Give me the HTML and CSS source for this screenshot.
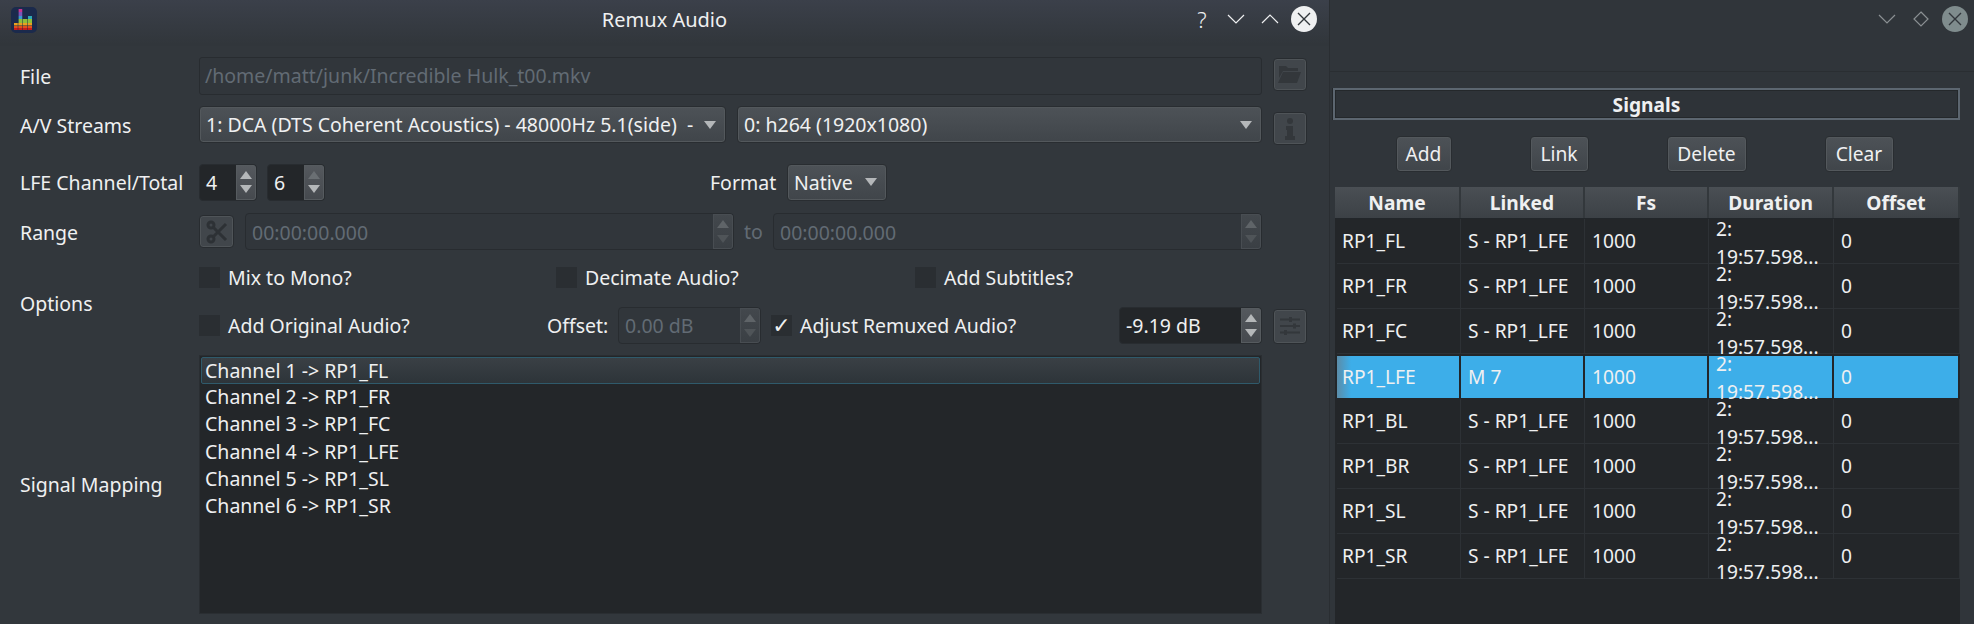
FILE: index.html
```html
<!DOCTYPE html>
<html>
<head>
  <meta charset="utf-8">
  <title>Remux Audio</title>
  <link rel="stylesheet" href="styles.css">
</head>
<body>
  <div class="dialog">
    <div class="titlebar">
      <svg class="app-icon" width="26" height="26" viewBox="0 0 26 26">
        <rect width="26" height="26" rx="5" fill="#1b2a4c"/>
        <rect x="7.500" y="2" width="4" height="3" fill="#c9358f"/>
        <rect x="7.500" y="5" width="4" height="4" fill="#7d55b8"/>
        <rect x="7.500" y="9" width="4" height="3" fill="#3a9ad0"/>
        <rect x="17" y="9" width="4" height="3" fill="#2fa8b8"/>
        <rect x="7.500" y="12" width="13.500" height="4" fill="#8fbf3a"/>
        <rect x="3" y="16" width="18" height="3" fill="#e8a020"/>
        <rect x="3" y="19" width="18" height="2" fill="#e0501c"/>
        <rect x="3" y="21" width="18" height="2" fill="#c81c1c"/>
        <path d="M7 2v21M11.500 2v21M16.500 9v14M3 18.500h18" stroke="#1b2a4c" stroke-width=".5"/>
      </svg>
      <div class="title">Remux Audio</div>
      <div class="win-btns">
        <span class="help">?</span>
        <svg class="win-btn" width="34" height="38" viewBox="0 0 34 38"><path d="M9 15l8 8 8-8" fill="none" stroke="#eff0f1" stroke-width="1.2"/></svg>
        <svg class="win-btn" width="34" height="38" viewBox="0 0 34 38"><path d="M9 23l8-8 8 8" fill="none" stroke="#eff0f1" stroke-width="1.2"/></svg>
        <svg class="win-btn" width="34" height="38" viewBox="0 0 34 38"><circle cx="17" cy="19" r="13" fill="#eff0f1"/><path d="M11 13l12 12M23 13l-12 12" stroke="#31363b" stroke-width="1.4"/></svg>
      </div>
    </div>

    <div class="row row-file">
      <div class="row-label">File</div>
      <div class="row-fields">
        <div class="input disabled grow">/home/matt/junk/Incredible Hulk_t00.mkv</div>
      </div>
      <div class="icon-btn">
        <svg width="24" height="18" viewBox="0 0 24 18"><path d="M1 0h7l2 2h10v3H5L1 12zM5 6h18l-4 11H0z" fill="#33373b"/></svg>
      </div>
    </div>

    <div class="row row-streams">
      <div class="row-label">A/V Streams</div>
      <div class="row-fields">
        <div class="combo stream-audio"><span class="combo-text">1: DCA (DTS Coherent Acoustics) - 48000Hz 5.1(side)  -</span><i class="arrow-down"></i></div>
        <div class="combo grow"><span class="combo-text">0: h264 (1920x1080)</span><i class="arrow-down"></i></div>
      </div>
      <div class="icon-btn">
        <svg width="12" height="22" viewBox="0 0 12 22"><circle cx="6" cy="3" r="3" fill="#33373b"/><path d="M2 8h7v10h2v4H1v-4h2v-6H2z" fill="#33373b"/></svg>
      </div>
    </div>

    <div class="row row-lfe">
      <div class="row-label">LFE Channel/Total</div>
      <div class="row-fields">
        <div class="spin spin-small"><span class="spin-text">4</span><div class="spin-arrows"><i class="arrow-up"></i><i class="arrow-down"></i></div></div>
        <div class="spin spin-small"><span class="spin-text">6</span><div class="spin-arrows"><i class="arrow-up dim"></i><i class="arrow-down"></i></div></div>
        <span class="format-label">Format</span>
        <div class="combo format-combo"><span class="combo-text">Native</span><i class="arrow-down"></i></div>
      </div>
    </div>

    <div class="row row-range">
      <div class="row-label">Range</div>
      <div class="row-fields">
        <div class="icon-btn scissors">
          <svg width="22" height="24" viewBox="0 0 22 24"><g fill="none" stroke="#2d3135" stroke-width="3"><circle cx="5" cy="5" r="3"/><circle cx="5" cy="19" r="3"/><path d="M7 7l13 13M7 17L20 4"/></g></svg>
        </div>
        <div class="spin disabled range-from"><span class="spin-text">00:00:00.000</span><div class="spin-arrows"><i class="arrow-up"></i><i class="arrow-down"></i></div></div>
        <span class="to-label">to</span>
        <div class="spin disabled grow"><span class="spin-text">00:00:00.000</span><div class="spin-arrows"><i class="arrow-up"></i><i class="arrow-down"></i></div></div>
      </div>
    </div>

    <div class="row row-options">
      <div class="row-label options-label">Options</div>
      <div class="row-fields options">
        <div class="options-line first">
          <label class="check check-mix"><i class="box"></i>Mix to Mono?</label>
          <label class="check check-decimate"><i class="box"></i>Decimate Audio?</label>
          <label class="check"><i class="box"></i>Add Subtitles?</label>
        </div>
        <div class="options-line">
          <label class="check check-original"><i class="box"></i>Add Original Audio?</label>
          <span class="offset-label">Offset:</span>
          <div class="spin disabled offset-spin"><span class="spin-text">0.00 dB</span><div class="spin-arrows"><i class="arrow-up"></i><i class="arrow-down"></i></div></div>
          <label class="check check-adjust"><i class="box">&#10003;</i>Adjust Remuxed Audio?</label>
          <div class="spin gain-spin"><span class="spin-text">-9.19 dB</span><div class="spin-arrows"><i class="arrow-up"></i><i class="arrow-down"></i></div></div>
        </div>
      </div>
      <div class="icon-btn sliders">
        <svg width="22" height="20" viewBox="0 0 22 20"><g fill="#33373b"><rect x="1" y="2.500" width="20" height="2"/><rect x="1" y="9" width="20" height="2"/><rect x="1" y="15.500" width="20" height="2"/><rect x="10" y="1" width="3" height="5"/><rect x="14" y="7.500" width="3" height="5"/><rect x="5" y="14" width="3" height="5"/></g></svg>
      </div>
    </div>

    <div class="row row-mapping">
      <div class="row-label">Signal Mapping</div>
      <div class="row-fields">
        <div class="map-list">
          <div class="map-item current">Channel 1 -&gt; RP1_FL</div>
          <div class="map-item">Channel 2 -&gt; RP1_FR</div>
          <div class="map-item">Channel 3 -&gt; RP1_FC</div>
          <div class="map-item">Channel 4 -&gt; RP1_LFE</div>
          <div class="map-item">Channel 5 -&gt; RP1_SL</div>
          <div class="map-item">Channel 6 -&gt; RP1_SR</div>
        </div>
      </div>
    </div>
  </div>

  <div class="signals">
    <div class="signals-top">
      <svg class="win-btn" width="34" height="38" viewBox="0 0 34 38"><path d="M9 15l8 8 8-8" fill="none" stroke="#8b9093" stroke-width="1.2"/></svg>
      <svg class="win-btn" width="34" height="38" viewBox="0 0 34 38"><path d="M17 12l7 7-7 7-7-7z" fill="none" stroke="#8b9093" stroke-width="1.2"/></svg>
      <svg class="win-btn" width="34" height="38" viewBox="0 0 34 38"><circle cx="17" cy="19" r="13" fill="#7f8c8d"/><path d="M11 13l12 12M23 13l-12 12" stroke="#31363b" stroke-width="1.4"/></svg>
    </div>
    <div class="signals-frame">Signals</div>
    <div class="signals-btns">
      <div class="push btn-add">Add</div>
      <div class="push btn-link">Link</div>
      <div class="push btn-delete">Delete</div>
      <div class="push btn-clear">Clear</div>
    </div>
    <div class="table">
      <div class="table-row table-head">
        <div>Name</div><div>Linked</div><div>Fs</div><div>Duration</div><div>Offset</div>
      </div>
      <div class="table-row"><div>RP1_FL</div><div>S - RP1_LFE</div><div>1000</div><div class="dur"><span>2:</span><span>19:57.598...</span></div><div>0</div></div>
      <div class="table-row"><div>RP1_FR</div><div>S - RP1_LFE</div><div>1000</div><div class="dur"><span>2:</span><span>19:57.598...</span></div><div>0</div></div>
      <div class="table-row"><div>RP1_FC</div><div>S - RP1_LFE</div><div>1000</div><div class="dur"><span>2:</span><span>19:57.598...</span></div><div>0</div></div>
      <div class="table-row selected"><div>RP1_LFE</div><div>M 7</div><div>1000</div><div class="dur"><span>2:</span><span>19:57.598...</span></div><div>0</div></div>
      <div class="table-row"><div>RP1_BL</div><div>S - RP1_LFE</div><div>1000</div><div class="dur"><span>2:</span><span>19:57.598...</span></div><div>0</div></div>
      <div class="table-row"><div>RP1_BR</div><div>S - RP1_LFE</div><div>1000</div><div class="dur"><span>2:</span><span>19:57.598...</span></div><div>0</div></div>
      <div class="table-row"><div>RP1_SL</div><div>S - RP1_LFE</div><div>1000</div><div class="dur"><span>2:</span><span>19:57.598...</span></div><div>0</div></div>
      <div class="table-row"><div>RP1_SR</div><div>S - RP1_LFE</div><div>1000</div><div class="dur"><span>2:</span><span>19:57.598...</span></div><div>0</div></div>
    </div>
  </div>
</body>
</html>
```

FILE: styles.css
```css
html, body {
  height: 100%;
}
body {
  margin: 0;
  display: flex;
  height: 624px;
  overflow: hidden;
  background: #31363b;
  color: #eff0f1;
  font-family: "Noto Sans", sans-serif;
  font-size: 19.5px;
}
.dialog {
  width: 1330px;
  flex: none;
  background: #32373c;
  border-right: 1px solid #2a2e32;
  box-sizing: border-box;
}
.titlebar {
  height: 46px;
  margin-bottom: 11px;
  display: flex;
  align-items: flex-start;
  background: linear-gradient(#3b404a, #31363b 44px);
  position: relative;
}
.app-icon {
  margin: 7px 0 0 11px;
}
.title {
  position: absolute;
  left: 0;
  right: 0;
  top: 6px;
  text-align: center;
  line-height: 28px;
  font-size: 20px;
}
.win-btns {
  margin-left: auto;
  margin-right: 8px;
  display: flex;
  align-items: center;
  height: 38px;
  position: relative;
}
.help {
  width: 34px;
  text-align: center;
  font-weight: 300;
  font-size: 22px;
}
.win-btn {
  display: block;
}

/* form rows */
.row {
  display: flex;
  align-items: center;
}
.row-label {
  width: 179px;
  padding-left: 20px;
  flex: none;
}
.options-label {
  margin-top: -5px;
}
.row-fields {
  width: 1063px;
  flex: none;
  display: flex;
  align-items: center;
}
.grow {
  flex: 1;
  min-width: 0;
}
.row-file { height: 38px; margin-bottom: 11px; }
.row-streams { height: 39px; margin-bottom: 18px; }
.row-streams .row-fields { align-self: flex-start; }
.row-lfe { height: 38px; margin-bottom: 12px; }
.row-range { height: 37px; margin-bottom: 18px; }
.row-range .row-label { padding-top: 2px; }
.row-range .spin-text { line-height: 38px; }
.row-options { height: 76px; margin-bottom: 11px; }
.row-mapping { height: 259px; }
.row-mapping .row-fields { height: 100%; }

.input {
  height: 38px;
  box-sizing: border-box;
  border: 1px solid #282c30;
  border-radius: 3px;
  padding: 0 5px;
  line-height: 36px;
  background: #31363b;
}
.disabled,
.disabled .spin-text {
  color: #626b74;
}
.disabled.input {
  background: #31363b;
}

.combo {
  height: 37px;
  box-sizing: border-box;
  display: flex;
  align-items: center;
  padding: 0 9px 0 6px;
  border: 1px solid #292d31;
  border-radius: 4px;
  background: linear-gradient(#4d5257, #40454a);
  box-shadow: inset 0 0 0 1px #53585c;
  overflow: hidden;
}
.combo-text {
  white-space: pre;
  overflow: hidden;
  flex: 1;
  line-height: 35px;
}
.combo .arrow-down {
  flex: none;
}
.stream-audio {
  width: 527px;
  margin-right: 11px;
}
.format-label {
  margin-left: 375px;
  width: 77px;
  flex: none;
}
.format-combo {
  width: 100px;
}

i.arrow-up,
i.arrow-down {
  display: block;
  width: 0;
  height: 0;
  border-left: 6px solid transparent;
  border-right: 6px solid transparent;
}
i.arrow-up { border-bottom: 8px solid #b4b7b9; }
i.arrow-down { border-top: 8px solid #b4b7b9; }
i.arrow-up.dim { border-bottom-color: #6a6f73; }
.disabled i.arrow-up { border-bottom-color: #5f6468; }
.disabled i.arrow-down { border-top-color: #4f5458; }

.spin {
  height: 37px;
  box-sizing: border-box;
  display: flex;
  border: 1px solid #282c30;
  border-radius: 4px;
  background: #232629;
  overflow: hidden;
}
.spin.disabled {
  background: #31363b;
}
.spin-text {
  flex: 1;
  min-width: 0;
  padding-left: 6px;
  line-height: 36px;
  white-space: nowrap;
  overflow: hidden;
}
.spin-arrows {
  width: 20px;
  flex: none;
  display: flex;
  flex-direction: column;
  align-items: center;
  justify-content: space-evenly;
  background: linear-gradient(#55595e, #45494e);
  box-shadow: inset 0 0 0 1px #565b5f;
  border-radius: 0 3px 3px 0;
}
.spin.disabled .spin-arrows {
  background: linear-gradient(#43484d, #3a3f44);
  box-shadow: inset 0 0 0 1px #484d52;
}
.spin-small {
  width: 58px;
  margin-right: 10px;
}
.range-from {
  width: 489px;
}
.to-label {
  width: 39px;
  padding-left: 10px;
  box-sizing: border-box;
  color: #626b74;
}

.icon-btn {
  width: 34px;
  height: 33px;
  flex: none;
  margin-left: 11px;
  box-sizing: border-box;
  display: flex;
  align-items: center;
  justify-content: center;
  border: 1px solid #282c30;
  border-radius: 4px;
  background: #41464b;
  box-shadow: inset 0 0 0 1px #4f5458;
}
.row-file .icon-btn { margin-top: -3px; }
.row-streams .icon-btn { margin-top: 6px; }
.row-options .icon-btn { margin-top: 40px; height: 35px; }
.icon-btn.scissors {
  margin: 0 11px 0 0;
  width: 35px;
}

/* options block */
.options {
  display: block;
}
.options-line {
  display: flex;
  align-items: center;
  height: 37px;
}
.options-line.first {
  height: 21px;
  margin-bottom: 19px;
  margin-top: -1px;
}
.check {
  display: flex;
  align-items: center;
  white-space: nowrap;
}
.box {
  width: 21px;
  height: 21px;
  flex: none;
  margin-right: 8px;
  background: #2a2e32;
  font-family: "DejaVu Sans", sans-serif;
  font-style: normal;
  font-weight: 700;
  font-size: 22px;
  line-height: 21px;
  text-align: center;
}
.check-mix { width: 357px; }
.check-decimate { width: 359px; }
.check-original { width: 348px; }
.offset-label { width: 71px; }
.offset-spin {
  width: 143px;
  margin-right: 10px;
}
.check-adjust { width: 348px; }
.gain-spin { width: 143px; }

/* channel list */
.map-list {
  flex: 1;
  height: 100%;
  box-sizing: border-box;
  border: 1px solid #2a2e32;
  background: #232629;
  padding: 1px;
}
.map-item {
  height: 27.300px;
  line-height: 26px;
  padding-left: 4px;
  box-sizing: border-box;
}
.map-item.current {
  height: 27px;
  border: 1px solid #2f5a6b;
  border-radius: 2px;
  background: linear-gradient(#3a4045, #2d3439);
  padding-left: 3px;
  line-height: 25px;
}

/* signals window */
.signals {
  flex: 1;
  min-width: 0;
  display: flex;
  flex-direction: column;
  background: #30353a;
  font-size: 19.200px;
}
.signals-top {
  height: 71px;
  flex: none;
  display: flex;
  justify-content: flex-end;
  align-items: flex-start;
  padding-right: 2px;
  border-bottom: 1px solid #2a2e32;
}
.signals-frame {
  margin: 16px 0 0 3px;
  width: 627px;
  height: 32px;
  flex: none;
  box-sizing: border-box;
  border: 2px solid #5c6670;
  box-shadow: inset 0 0 0 1px #24282b, -1px 0 0 #24282b;
  background: #2e3338;
  text-align: center;
  font-weight: 700;
  line-height: 30px;
}
.signals-btns {
  display: flex;
  justify-content: center;
  gap: 78px;
  width: 627px;
  margin: 16px 0 15px 3px;
  padding-right: 4px;
  box-sizing: border-box;
  flex: none;
}
.push {
  height: 36px;
  box-sizing: border-box;
  border: 1px solid #292d31;
  border-radius: 4px;
  background: linear-gradient(#4d5257, #40454a);
  box-shadow: inset 0 0 0 1px #53585c;
  text-align: center;
  line-height: 33px;
}
.btn-add { width: 56px; }
.btn-link { width: 59px; }
.btn-delete { width: 80px; }
.btn-clear { width: 69px; }

.table {
  flex: 1;
  width: 625px;
  margin-left: 5px;
  background: #232629;
}
.table-row {
  display: grid;
  grid-template-columns: 124px 124px 124px 125px 126px;
  grid-template-rows: minmax(0, 1fr);
  height: 45px;
  margin-left: 2px;
  box-sizing: border-box;
  border-bottom: 1px solid #2d3135;
}
.table-row > div {
  display: flex;
  align-items: center;
  min-height: 0;
  padding-left: 7px;
  border-right: 1px solid #2d3135;
  white-space: nowrap;
  overflow: hidden;
  line-height: 28px;
  box-sizing: border-box;
}
.table-row > div:first-child {
  padding-left: 5px;
}
.table-row > div.dur {
  flex-direction: column;
  align-items: flex-start;
  justify-content: center;
  overflow: visible;
  padding-top: 3px;
  line-height: 18px;
  gap: 10px;
}
.table-head {
  grid-template-columns: 126px 124px 124px 125px 126px;
  margin-left: 0;
  height: 32px;
  border-bottom: 1px solid #22262a;
  background: linear-gradient(#4a4f54, #3c4146);
}
.table-head > div {
  justify-content: center;
  padding: 0;
  font-weight: 700;
  border-right: 2px solid #33383c;
}
.table-head > div:first-child {
  padding: 0;
}
.table-row.selected {
  border-bottom: 0;
}
.table-row.selected > div {
  background: #3daee9;
  border-right: 2px solid #232629;
  border-top: 2px solid #232629;
  border-bottom: 1px solid #232629;
}
.table-row.selected > div.dur {
  padding-top: 2px;
}
.table-row.selected > div:first-child {
  background: linear-gradient(to right, #5b8ca8, #3daee9 14px);
}
```
